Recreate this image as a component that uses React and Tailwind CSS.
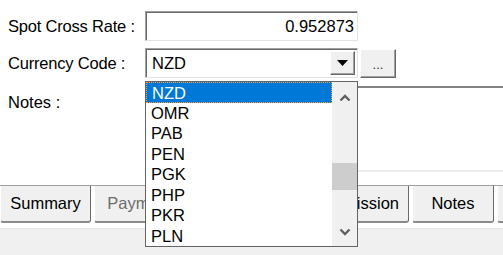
import React from 'react';

const CODES = ['NZD', 'OMR', 'PAB', 'PEN', 'PGK', 'PHP', 'PKR', 'PLN'];

const TABS = [
  { label: 'Summary', w: 'w-[91px]' },
  { label: 'Payments', w: 'w-[100px]', disabled: true },
  { label: 'Charges', w: 'w-[101px]' },
  { label: 'Commission', w: 'w-[108px]', right: true },
  { label: 'Notes', w: 'w-[82px]' },
  { label: '', w: 'w-[80px]' },
];

// sunken win32 edit border
const sunken =
  'border border-t-[#a0a0a0] border-l-[#a0a0a0] border-r-[#e3e3e3] border-b-[#e3e3e3] shadow-[inset_1px_1px_0_#696969] bg-white';
const raised =
  'border border-t-[#fff] border-l-[#fff] border-r-[#696969] border-b-[#696969] shadow-[inset_-1px_-1px_0_#a0a0a0] bg-[#f0f0f0]';

function Chevron({ up }) {
  return (
    <svg width="12" height="8" viewBox="0 0 12 8">
      <path
        d={up ? 'M1.5 6.5 L6 2 L10.5 6.5' : 'M1.5 1.5 L6 6 L10.5 1.5'}
        fill="none"
        stroke="#606060"
        strokeWidth="2.4"
      />
    </svg>
  );
}

function DropList() {
  return (
    <div className="absolute left-[145px] top-[81px] w-[213px] h-[166px] border border-[#646464] bg-white flex">
      <div className="flex-1 flex flex-col">
        {CODES.map((c, i) => (
          <div
            key={c}
            className={`h-[20.5px] leading-[20px] pl-[5px] ${
              i === 0
                ? 'bg-[#0078d7] text-white border border-dotted border-[#ff9c3c] pl-[4px] leading-[18px]'
                : 'text-black'
            }`}
          >
            {c}
          </div>
        ))}
      </div>
      <div className="w-[25px] bg-[#f0f0f0] flex flex-col items-center">
        <div className="h-[31px] flex items-center justify-center">
          <Chevron up />
        </div>
        <div className="h-[50px]" />
        <div className="w-full h-[27px] bg-[#cdcdcd]" />
        <div className="flex-1" />
        <div className="h-[28px] flex items-center justify-center">
          <Chevron />
        </div>
      </div>
    </div>
  );
}

export default function App() {
  return (
    <div className="relative w-[503px] h-[255px] overflow-hidden bg-white font-['Liberation_Sans',Arial,sans-serif] text-[16.5px] text-black">
      <div className="pt-[11px] flex flex-col">
        {/* Spot cross rate */}
        <div className="flex items-center h-[30px]">
          <div className="w-[145px] pl-[8px] tracking-[-0.2px]">Spot Cross Rate :</div>
          <div className={`w-[213px] h-[30px] ${sunken} flex items-center justify-end pr-[3px]`}>
            0.952873
          </div>
        </div>

        {/* Currency code */}
        <div className="flex items-center h-[30px] mt-[7px]">
          <div className="w-[145px] pl-[8px] tracking-[-0.2px]">Currency Code :</div>
          <div className={`w-[213px] h-[30px] ${sunken} flex items-center pl-[6px] pr-[2px]`}>
            <span className="flex-1">NZD</span>
            <div className={`w-[25px] h-[24px] ${raised} flex items-center justify-center`}>
              <svg width="11" height="6" viewBox="0 0 11 6">
                <path d="M0 0 H11 L5.5 6 Z" fill="#000" />
              </svg>
            </div>
          </div>
          <div className={`ml-[2px] w-[36px] h-[29px] ${raised} flex items-center justify-center text-[13px] text-[#333] pt-[4px]`}>
            ...
          </div>
        </div>

        {/* Notes */}
        <div className="flex mt-[8px] h-[86px]">
          <div className="w-[145px] pl-[8px] pt-[4px]">Notes :</div>
          <div className="flex-1 -mr-[10px] border-2 border-t-[#828282] border-l-[#828282] border-b-[#ececec] border-r-[#ececec] bg-white" />
        </div>

        {/* Tabs (bottom aligned) */}
        <div className="mt-[13px] border-t border-[#a0a0a0] flex gap-[3px]">
          {TABS.map((t, i) => (
            <div
              key={i}
              className={`${t.w} shrink-0 h-[37px] bg-[#f0f0f0] border-l border-l-white border-r border-r-[#696969] border-b-2 border-b-[#8a8a8a] rounded-b-[3px] flex items-center ${
                t.right ? 'justify-end pr-[9px]' : 'justify-center'
              } ${t.disabled ? 'text-[#6d6d6d]' : 'text-black'}`}
            >
              {t.label}
            </div>
          ))}
        </div>

        <div className="mt-[5px] border-t border-[#e3e3e3] bg-[#f0f0f0] h-[40px]" />
      </div>

      <DropList />
    </div>
  );
}
